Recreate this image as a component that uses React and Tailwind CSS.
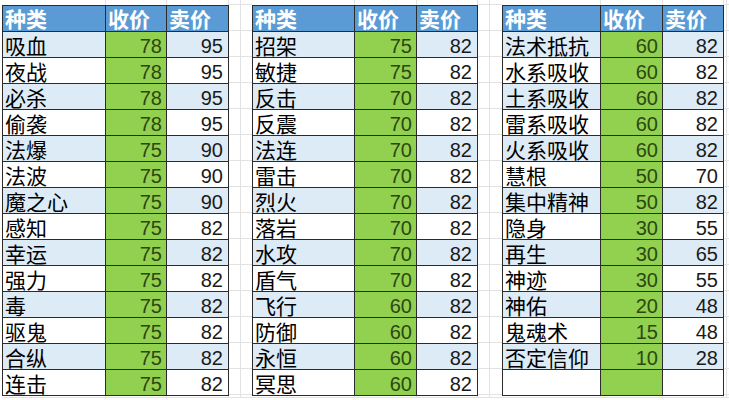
import React from "react";

const tables = [
  {
    w: ["w-[103px]", "w-[61px]", "w-[62px]"],
    rows: [
      ["吸血", "78", "95"], ["夜战", "78", "95"], ["必杀", "78", "95"], ["偷袭", "78", "95"],
      ["法爆", "75", "90"], ["法波", "75", "90"], ["魔之心", "75", "90"], ["感知", "75", "82"],
      ["幸运", "75", "82"], ["强力", "75", "82"], ["毒", "75", "82"], ["驱鬼", "75", "82"],
      ["合纵", "75", "82"], ["连击", "75", "82"],
    ],
  },
  {
    w: ["w-[102px]", "w-[62px]", "w-[61px]"],
    rows: [
      ["招架", "75", "82"], ["敏捷", "75", "82"], ["反击", "70", "82"], ["反震", "70", "82"],
      ["法连", "70", "82"], ["雷击", "70", "82"], ["烈火", "70", "82"], ["落岩", "70", "82"],
      ["水攻", "70", "82"], ["盾气", "70", "82"], ["飞行", "60", "82"], ["防御", "60", "82"],
      ["永恒", "60", "82"], ["冥思", "60", "82"],
    ],
  },
  {
    w: ["w-[98px]", "w-[62px]", "w-[61px]"],
    rows: [
      ["法术抵抗", "60", "82"], ["水系吸收", "60", "82"], ["土系吸收", "60", "82"], ["雷系吸收", "60", "82"],
      ["火系吸收", "60", "82"], ["慧根", "50", "70"], ["集中精神", "50", "82"], ["隐身", "30", "55"],
      ["再生", "30", "65"], ["神迹", "30", "55"], ["神佑", "20", "48"], ["鬼魂术", "15", "48"],
      ["否定信仰", "10", "28"], ["", "", ""],
    ],
  },
];

const cjk = { fontFamily: '"Noto Sans CJK SC", "Noto Sans", sans-serif' };
const num = { fontFamily: '"Liberation Sans", Arial, sans-serif' };

function Table({ t }) {
  return (
    <div className="flex flex-col">
      <div className="h-[5px] flex pl-[1px]">
        {t.w.map((w, i) => (
          <div key={i} className={`${w} h-full border-r border-[#e2e2e2]`} />
        ))}
      </div>
      <div className="flex flex-col border-l border-t border-[#2b2b2b]">
        <div className="flex h-[26px] bg-[#5b9bd5]">
          {["种类", "收价", "卖价"].map((h, i) => (
            <div
              key={i}
              className={`${t.w[i]} h-full border-r border-b border-[#2b2b2b] pl-[2px] flex items-center text-white font-bold text-[21px] leading-none whitespace-nowrap`}
              style={cjk}
            >
              {h}
            </div>
          ))}
        </div>
        {t.rows.map((r, ri) => {
          const band = ri % 2 === 0 ? "bg-[#ddebf7]" : "bg-white";
          return (
            <div key={ri} className="flex h-[26px]">
              <div
                className={`${t.w[0]} ${band} h-full border-r border-b border-[#2b2b2b] pl-[2px] pt-[1px] flex items-center text-black text-[21px] leading-none whitespace-nowrap`}
                style={cjk}
              >
                {r[0]}
              </div>
              <div
                className={`${t.w[1]} bg-[#92d050] h-full border-r border-b border-[#2b2b2b] pr-[4px] pt-[2px] flex items-center justify-end text-[#2c4810] text-[20px] leading-none`}
                style={num}
              >
                {r[1]}
              </div>
              <div
                className={`${t.w[2]} ${band} h-full border-r border-b border-[#2b2b2b] pr-[5px] pt-[2px] flex items-center justify-end text-[#1a1a1a] text-[20px] leading-none`}
                style={num}
              >
                {r[2]}
              </div>
            </div>
          );
        })}
      </div>
      <div className="flex-1 flex pl-[1px] border-b border-[#e2e2e2] mb-[2px]">
        {t.w.map((w, i) => (
          <div key={i} className={`${w} h-full border-r border-[#e2e2e2]`} />
        ))}
      </div>
    </div>
  );
}

function Gap({ w }) {
  return (
    <div className={`${w} flex flex-col`}>
      <div className="h-[5px] border-b border-[#e2e2e2] flex">
        <div className="w-1/2 h-full border-r border-[#e2e2e2]" />
      </div>
      {Array.from({ length: 15 }).map((_, i) => (
        <div key={i} className="h-[26px] border-b border-[#e2e2e2] flex">
          <div className="w-1/2 h-full border-r border-[#e2e2e2]" />
        </div>
      ))}
      <div className="flex-1 flex border-b border-[#e2e2e2] mb-[2px]">
        <div className="w-1/2 h-full border-r border-[#e2e2e2]" />
      </div>
    </div>
  );
}

export default function App() {
  return (
    <div className="w-[729px] h-[400px] bg-white overflow-hidden flex pl-[2px]">
      <Table t={tables[0]} />
      <Gap w="w-[23px]" />
      <Table t={tables[1]} />
      <Gap w="w-[24px]" />
      <Table t={tables[2]} />
      <Gap w="w-[5px]" />
    </div>
  );
}
